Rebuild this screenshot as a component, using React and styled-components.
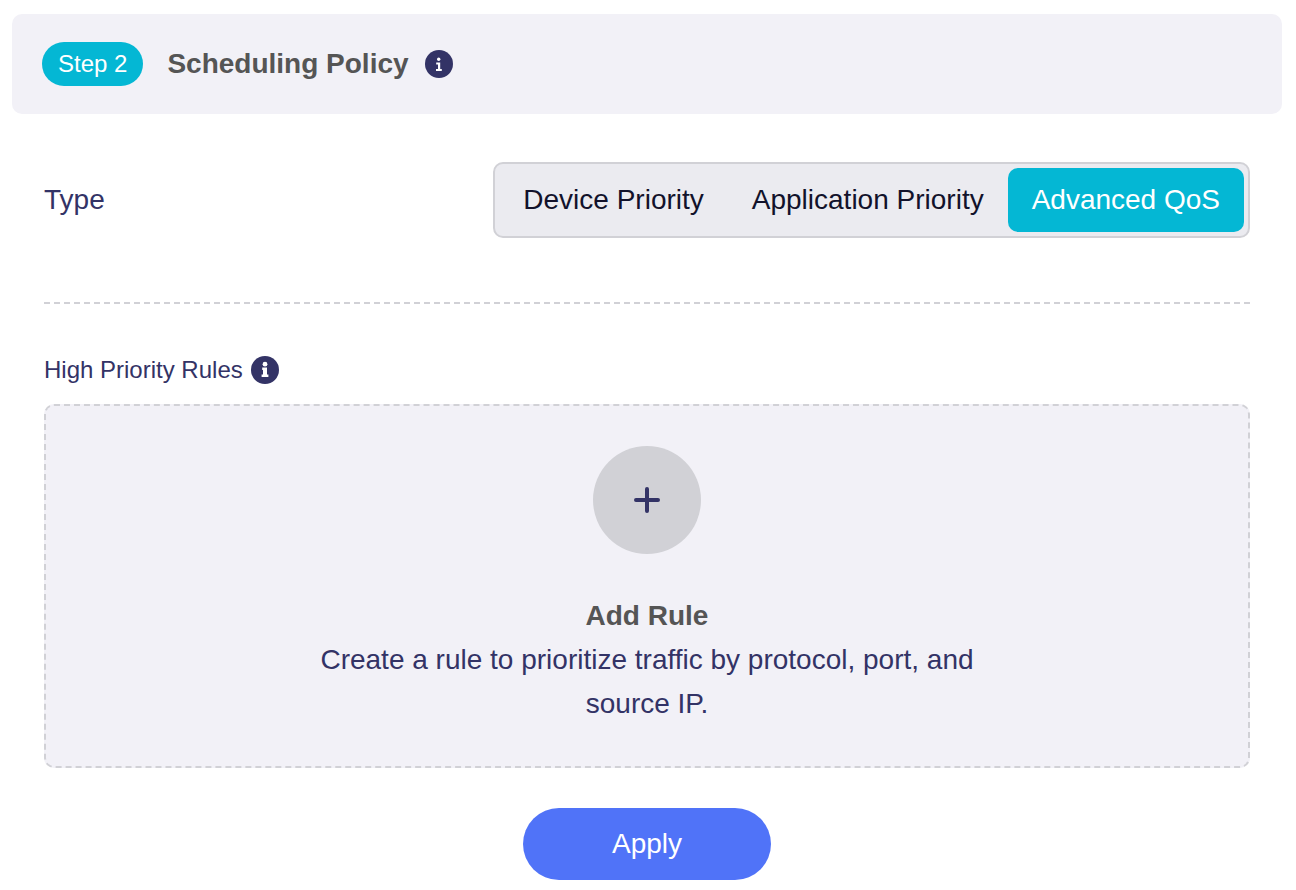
import React, { useState } from "react";
import styled, { createGlobalStyle } from "styled-components";

const GlobalStyle = createGlobalStyle`
  *, *::before, *::after { box-sizing: border-box; }
  body {
    margin: 0;
    background: #ffffff;
    color: #333366;
    font-family: Arial, "Liberation Sans", sans-serif;
    font-size: 28px;
    line-height: 44px;
  }
  button { font: inherit; border: 0; cursor: pointer; }
`;

const Page = styled.main`
  padding: 14px 14px 10px 12px;
`;

const StepHeader = styled.header`
  display: flex;
  align-items: center;
  padding: 28px 30px;
  border-radius: 10px;
  background: #f2f1f7;
`;

const StepBadge = styled.span`
  margin-right: 24px;
  padding: 0 16px;
  border-radius: 22px;
  background: #04b7d4;
  color: #ffffff;
  font-size: 24px;
`;

const StepTitle = styled.h1`
  margin: 0 16px 0 0;
  color: #555555;
  font-size: 28px;
`;

const InfoButton = styled.button`
  display: flex;
  padding: 0;
  border-radius: 50%;
  background: none;
  color: #333366;
`;

const Content = styled.section`
  display: flex;
  flex-direction: column;
  padding: 48px 32px 0;
`;

const TypeRow = styled.div`
  display: flex;
  align-items: center;
  justify-content: space-between;
  padding-bottom: 64px;
  border-bottom: 2px dashed #d1d1d6;
`;

const Segments = styled.div`
  display: flex;
  padding: 4px;
  border: 2px solid #d1d1d6;
  border-radius: 10px;
  background: #ebebf0;
`;

const Segment = styled.button`
  padding: 10px 24px;
  border-radius: 10px;
  background: ${(p) => (p.$active ? "#04b7d4" : "transparent")};
  color: ${(p) => (p.$active ? "#ffffff" : "#12122b")};
`;

const RulesHeading = styled.div`
  display: flex;
  align-items: center;
  gap: 8px;
  padding: 44px 0 12px;
`;

const RulesTitle = styled.h2`
  margin: 0;
  font-size: 24px;
  font-weight: 400;
`;

const RulesPanel = styled.div`
  display: flex;
  flex-direction: column;
  align-items: center;
  padding: 40px 24px;
  border: 2px dashed #d1d1d6;
  border-radius: 10px;
  background: #f2f1f7;
  text-align: center;
`;

const AddButton = styled.button`
  display: flex;
  align-items: center;
  justify-content: center;
  width: 108px;
  height: 108px;
  margin-bottom: 40px;
  border-radius: 50%;
  background: #d1d1d6;
  color: #333366;
`;

const AddTitle = styled.h3`
  margin: 0;
  color: #555555;
  font-size: 28px;
`;

const AddText = styled.p`
  max-width: 700px;
  margin: 0;
`;

const ApplyButton = styled.button`
  align-self: center;
  width: 248px;
  margin-top: 40px;
  padding: 14px 24px;
  border-radius: 36px;
  background: #5073f8;
  color: #ffffff;
`;

const InfoSvg = styled.svg`
  width: 28px;
  height: 28px;
  fill: #ffffff;
`;

function InfoIcon({ bold }) {
  return (
    <InfoSvg viewBox="0 0 28 28" aria-hidden="true">
      <circle cx="14" cy="14" r="14" fill="currentColor" />
      {bold ? (
        <>
          <circle cx="14" cy="8.2" r="2.4" />
          <path d="M11.2 11.6h4.8v7h1.4v2.4h-6.8v-2.4h1.4v-4.6h-0.8z" />
        </>
      ) : (
        <>
          <circle cx="13.7" cy="9.3" r="1.7" />
          <path d="M11.2 12.6h4v6.4h1.6v2h-5.8v-2h2v-4.4h-1.8z" />
        </>
      )}
    </InfoSvg>
  );
}

function PlusIcon() {
  return (
    <svg width="28" height="28" viewBox="0 0 28 28" fill="none" stroke="currentColor" strokeWidth="4" strokeLinecap="round" aria-hidden="true">
      <path d="M14 3v22M3 14h22" />
    </svg>
  );
}

const TYPES = ["Device Priority", "Application Priority", "Advanced QoS"];

export default function App() {
  const [type, setType] = useState("Advanced QoS");
  return (
    <Page>
      <GlobalStyle />
      <StepHeader>
        <StepBadge>Step 2</StepBadge>
        <StepTitle>Scheduling Policy</StepTitle>
        <InfoButton type="button" aria-label="About scheduling policy">
          <InfoIcon />
        </InfoButton>
      </StepHeader>
      <Content>
        <TypeRow>
          <span id="type-label">Type</span>
          <Segments role="group" aria-labelledby="type-label">
            {TYPES.map((name) => (
              <Segment
                key={name}
                type="button"
                $active={name === type}
                aria-pressed={name === type}
                onClick={() => setType(name)}
              >
                {name}
              </Segment>
            ))}
          </Segments>
        </TypeRow>
        <RulesHeading>
          <RulesTitle>High Priority Rules</RulesTitle>
          <InfoButton type="button" aria-label="About high priority rules">
            <InfoIcon bold />
          </InfoButton>
        </RulesHeading>
        <RulesPanel>
          <AddButton type="button" aria-labelledby="add-rule-title">
            <PlusIcon />
          </AddButton>
          <AddTitle id="add-rule-title">Add Rule</AddTitle>
          <AddText>Create a rule to prioritize traffic by protocol, port, and source IP.</AddText>
        </RulesPanel>
        <ApplyButton type="button">Apply</ApplyButton>
      </Content>
    </Page>
  );
}
